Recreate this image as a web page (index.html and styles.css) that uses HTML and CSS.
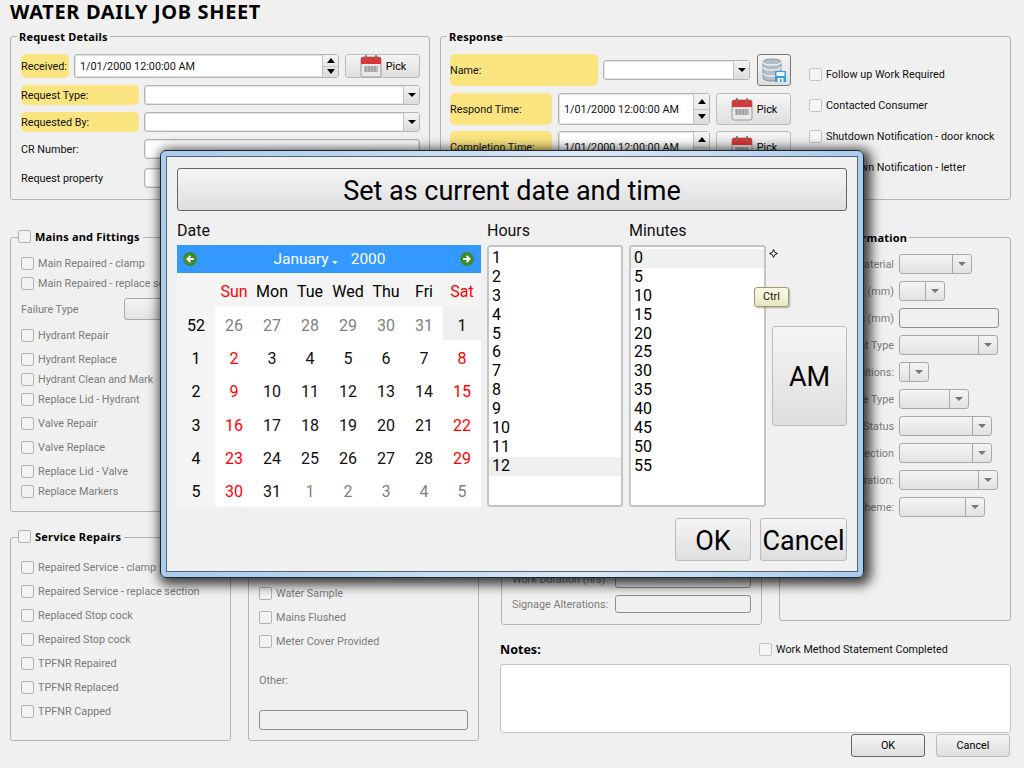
FILE: index.html
```html
<!DOCTYPE html>
<html lang="en">
<head>
    <meta charset="UTF-8">
    <title>Water Daily Job Sheet</title>
    <link rel="stylesheet" href="styles.css">
</head>
<body>
    <svg class="defs" width="0" height="0">
        <symbol id="cal" viewBox="0 0 24 24">
            <rect x="2" y="3" width="20" height="20" rx="2" fill="#e8e8e8" stroke="#9a9a9a"/>
            <path d="M2 5a2 2 0 0 1 2-2h16a2 2 0 0 1 2 2v5H2z" fill="#d9363a"/>
            <rect x="6" y="1" width="2" height="5" rx="1" fill="#8a6a60"/>
            <rect x="16" y="1" width="2" height="5" rx="1" fill="#8a6a60"/>
            <path d="M5 13h14M5 15h14M5 17h14M7 12v6M10 12v6M13 12v6M16 12v6" stroke="#8f8f8f" stroke-width="1"/>
        </symbol>
    </svg>

    <div class="page">
        <h1>WATER DAILY JOB SHEET</h1>

        <div class="top">
            <section class="group details">
                <div class="group-title">Request Details</div>
                <div class="row row-received">
                    <span class="req req-short">Received:</span>
                    <div class="spin spin-wide"><span>1/01/2000 12:00:00 AM</span><b class="spin-btns"><i class="up"></i><i class="down"></i></b></div>
                    <button class="btn pick"><svg width="24" height="24"><use href="#cal"/></svg>Pick</button>
                </div>
                <div class="row row-20 mt-7">
                    <span class="req req-wide">Request Type:</span>
                    <div class="combo grow"><b class="arrow"></b></div>
                </div>
                <div class="row row-20 mt-7">
                    <span class="req req-wide">Requested By:</span>
                    <div class="combo grow"><b class="arrow"></b></div>
                </div>
                <div class="row row-20 mt-7">
                    <span class="plain-label">CR Number:</span>
                    <div class="field grow"></div>
                </div>
                <div class="row row-20 mt-9">
                    <span class="plain-label">Request property</span>
                    <div class="field grow"></div>
                </div>
            </section>

            <section class="group response">
                <div class="group-title">Response</div>
                <div class="response-body">
                    <div class="response-left">
                        <div class="row row-32">
                            <span class="req req-name">Name:</span>
                            <div class="combo combo-name"><b class="arrow"></b></div>
                            <button class="btn db-btn">
                                <svg width="26" height="26" viewBox="0 0 26 26">
                                    <path d="M2 5c0-4 18-4 18 0v16c0 4-18 4-18 0z" fill="#b4bcc4" stroke="#8a949c"/>
                                    <path d="M2 10c0 4 18 4 18 0M2 16c0 4 18 4 18 0M2 5c0 4 18 4 18 0" fill="none" stroke="#eef1f3" stroke-width="1.3"/>
                                    <rect x="14" y="14" width="11" height="11" fill="#3f9ad6"/>
                                    <rect x="15.500" y="15" width="8" height="4" fill="#eaf4fb"/>
                                    <path d="M16.500 25v-4h6v4h-2v-3h-1.500v3z" fill="#eaf4fb"/>
                                </svg>
                            </button>
                        </div>
                        <div class="row row-32 mt-7">
                            <span class="req req-time">Respond Time:</span>
                            <div class="spin spin-time"><span>1/01/2000 12:00:00 AM</span><b class="spin-btns"><i class="up"></i><i class="down"></i></b></div>
                            <button class="btn pick"><svg width="24" height="24"><use href="#cal"/></svg>Pick</button>
                        </div>
                        <div class="row row-32 mt-6">
                            <span class="req req-time">Completion Time:</span>
                            <div class="spin spin-time"><span>1/01/2000 12:00:00 AM</span><b class="spin-btns"><i class="up"></i><i class="down"></i></b></div>
                            <button class="btn pick"><svg width="24" height="24"><use href="#cal"/></svg>Pick</button>
                        </div>
                    </div>
                    <div class="response-checks">
                        <label class="check enabled"><i></i>Follow up Work Required</label>
                        <label class="check enabled"><i></i>Contacted Consumer</label>
                        <label class="check enabled"><i></i>Shutdown Notification - door knock</label>
                        <label class="check enabled"><i></i>Shutdown Notification - letter</label>
                    </div>
                </div>
            </section>
        </div>

        <div class="lower">
            <div class="col-a">
                <section class="group mains">
                    <div class="group-title has-check"><i class="box"></i>Mains and Fittings</div>
                    <label class="check"><i></i>Main Repaired - clamp</label>
                    <label class="check"><i></i>Main Repaired - replace section</label>
                    <div class="row failure mt-6"><span class="muted">Failure Type</span><div class="combo disabled failure-combo"></div></div>
                    <label class="check mt-6"><i></i>Hydrant Repair</label>
                    <label class="check mt-4"><i></i>Hydrant Replace</label>
                    <label class="check"><i></i>Hydrant Clean and Mark</label>
                    <label class="check"><i></i>Replace Lid - Hydrant</label>
                    <label class="check mt-4"><i></i>Valve Repair</label>
                    <label class="check mt-4"><i></i>Valve Replace</label>
                    <label class="check mt-4"><i></i>Replace Lid - Valve</label>
                    <label class="check"><i></i>Replace Markers</label>
                </section>
                <section class="group service">
                    <div class="group-title has-check"><i class="box"></i>Service Repairs</div>
                    <label class="check spaced"><i></i>Repaired Service - clamp</label>
                    <label class="check spaced"><i></i>Repaired Service - replace section</label>
                    <label class="check spaced"><i></i>Replaced Stop cock</label>
                    <label class="check spaced"><i></i>Repaired Stop cock</label>
                    <label class="check spaced"><i></i>TPFNR Repaired</label>
                    <label class="check spaced"><i></i>TPFNR Replaced</label>
                    <label class="check spaced"><i></i>TPFNR Capped</label>
                </section>
            </div>

            <section class="group col-b">
                <label class="check spaced"><i></i>Water Sample</label>
                <label class="check spaced"><i></i>Mains Flushed</label>
                <label class="check spaced"><i></i>Meter Cover Provided</label>
                <span class="muted other-label">Other:</span>
                <div class="field disabled other-field"></div>
            </section>

            <div class="col-c">
                <div class="col-c-groups">
                    <section class="group work">
                        <div class="row work-row"><span class="muted">Work Duration (hrs)</span><div class="field disabled work-field"></div></div>
                        <div class="row work-row mt-7"><span class="muted">Signage Alterations:</span><div class="field disabled work-field"></div></div>
                    </section>
                    <section class="group info">
                        <div class="group-title info-title">Information</div>
                        <div class="info-row"><span class="muted">Material</span><div class="combo disabled w-73"><b class="arrow"></b></div></div>
                        <div class="info-row"><span class="muted">Diameter (mm)</span><div class="combo disabled w-46"><b class="arrow"></b></div></div>
                        <div class="info-row"><span class="muted">Length (mm)</span><div class="field disabled w-100"></div></div>
                        <div class="info-row"><span class="muted">Joint Type</span><div class="combo disabled w-99"><b class="arrow"></b></div></div>
                        <div class="info-row"><span class="muted">Conditions:</span><div class="combo disabled w-30"><b class="arrow"></b></div></div>
                        <div class="info-row"><span class="muted">Pipe Type</span><div class="combo disabled w-70"><b class="arrow"></b></div></div>
                        <div class="info-row"><span class="muted">Status</span><div class="combo disabled w-93"><b class="arrow"></b></div></div>
                        <div class="info-row"><span class="muted">Direction</span><div class="combo disabled w-93"><b class="arrow"></b></div></div>
                        <div class="info-row"><span class="muted">Duration:</span><div class="combo disabled w-99"><b class="arrow"></b></div></div>
                        <div class="info-row"><span class="muted">Scheme:</span><div class="combo disabled w-86"><b class="arrow"></b></div></div>
                    </section>
                </div>
                <div class="notes-head">
                    <span class="notes-label">Notes:</span>
                    <label class="check enabled"><i></i>Work Method Statement Completed</label>
                </div>
                <div class="notes"></div>
                <div class="form-buttons">
                    <button class="btn form-btn default">OK</button>
                    <button class="btn form-btn">Cancel</button>
                </div>
            </div>
        </div>
    </div>

    <!-- date picker dialog -->
    <div class="dialog">
        <div class="dialog-inner">
            <button class="btn now-btn">Set as current date and time</button>
            <div class="pickers">
                <div class="date-col">
                    <div class="pick-label">Date</div>
                    <div class="calendar">
                        <div class="cal-head">
                            <svg width="14" height="14" viewBox="0 0 16 16"><circle cx="8" cy="8" r="8" fill="#3d8b2c"/><path d="M12.500 8H6M8.500 4.500 5 8l3.500 3.500" fill="none" stroke="#fff" stroke-width="2.200"/></svg>
                            <span class="cal-title">January<i class="cal-drop"></i><em>2000</em></span>
                            <svg width="14" height="14" viewBox="0 0 16 16"><circle cx="8" cy="8" r="8" fill="#3d8b2c"/><path d="M3.500 8H10M7.500 4.500 11 8l-3.500 3.500" fill="none" stroke="#fff" stroke-width="2.200"/></svg>
                        </div>
                        <div class="cal-grid">
                            <span class="hd"></span><span class="hd red">Sun</span><span class="hd">Mon</span><span class="hd">Tue</span><span class="hd">Wed</span><span class="hd">Thu</span><span class="hd">Fri</span><span class="hd red">Sat</span>
                            <span class="wk">52</span><span class="gr">26</span><span class="gr">27</span><span class="gr">28</span><span class="gr">29</span><span class="gr">30</span><span class="gr">31</span><span class="sel">1</span>
                            <span class="wk">1</span><span class="red">2</span><span>3</span><span>4</span><span>5</span><span>6</span><span>7</span><span class="red">8</span>
                            <span class="wk">2</span><span class="red">9</span><span>10</span><span>11</span><span>12</span><span>13</span><span>14</span><span class="red">15</span>
                            <span class="wk">3</span><span class="red">16</span><span>17</span><span>18</span><span>19</span><span>20</span><span>21</span><span class="red">22</span>
                            <span class="wk">4</span><span class="red">23</span><span>24</span><span>25</span><span>26</span><span>27</span><span>28</span><span class="red">29</span>
                            <span class="wk">5</span><span class="red">30</span><span>31</span><span class="gr">1</span><span class="gr">2</span><span class="gr">3</span><span class="gr">4</span><span class="gr">5</span>
                        </div>
                    </div>
                </div>
                <div class="list-col">
                    <div class="pick-label">Hours</div>
                    <ul class="list">
                        <li>1</li><li>2</li><li>3</li><li>4</li><li>5</li><li>6</li><li>7</li><li>8</li><li>9</li><li>10</li><li>11</li><li class="on">12</li>
                    </ul>
                </div>
                <div class="list-col minutes">
                    <div class="pick-label">Minutes</div>
                    <ul class="list">
                        <li class="on">0</li><li>5</li><li>10</li><li>15</li><li>20</li><li>25</li><li>30</li><li>35</li><li>40</li><li>45</li><li>50</li><li>55</li>
                    </ul>
                </div>
                <button class="btn am-btn">AM</button>
            </div>
            <div class="dialog-buttons">
                <button class="btn big-btn ok">OK</button>
                <button class="btn big-btn cancel">Cancel</button>
            </div>
        </div>
    </div>

    <svg class="cursor" width="9" height="9" viewBox="0 0 9 9"><path d="M4.500 .5 5.700 3.300 8.500 4.500 5.700 5.700 4.500 8.500 3.300 5.700 .5 4.500 3.300 3.300z" fill="#fff" stroke="#000" stroke-width=".9"/></svg>
    <div class="tooltip">Ctrl</div>
</body>
</html>
```

FILE: styles.css
```css
* {
    box-sizing: border-box;
    margin: 0;
    padding: 0;
}

body {
    width: 1024px;
    height: 768px;
    overflow: hidden;
    position: relative;
    background-color: #f0f0f0;
    color: #111;
    font-family: Roboto, sans-serif;
    font-size: 10.8px;
}

.defs {
    position: absolute;
}

.page {
    padding: 0 13px 0 10px;
}

h1 {
    height: 36px;
    font-family: "Noto Sans", sans-serif;
    font-size: 20px;
    line-height: 24px;
    font-weight: 700;
    letter-spacing: 0.65px;
    color: #000;
}

.top {
    display: flex;
    gap: 10px;
    height: 164px;
}

.group {
    border: 1px solid #b4b4b4;
    border-radius: 3px;
}

.group-title {
    width: fit-content;
    margin: -8px 0 0 -4px;
    padding: 0 2px;
    height: 15px;
    line-height: 15px;
    background-color: #f0f0f0;
    font-family: "Noto Sans", sans-serif;
    font-size: 11px;
    font-weight: 700;
    letter-spacing: 0.2px;
    color: #000;
}

.has-check {
    display: flex;
    align-items: center;
    margin-left: -3px;
    padding: 0 3px 2px 0;
}

.box,
.check i {
    display: block;
    flex: none;
    width: 13px;
    height: 13px;
    border: 1px solid #b2b2b2;
    border-radius: 2px;
    background-color: #f2f2f2;
}

.box {
    margin-right: 4px;
}

.row {
    display: flex;
    align-items: center;
}

.row-20 { height: 20px; }
.row-32 { height: 32px; }
.mt-4 { margin-top: 4px; }
.mt-6 { margin-top: 6px; }
.mt-7 { margin-top: 7px; }
.mt-9 { margin-top: 9px; }

/* request details */
.details {
    width: 420px;
    padding: 0 9px 0 10px;
}

.row-received {
    height: 24px;
    margin-top: 10px;
    gap: 5px;
}

.row-received .pick {
    margin-left: 1px;
}

.req {
    display: flex;
    align-items: center;
    align-self: stretch;
    flex: none;
    background-color: #f9e480;
    border-radius: 5px;
}

.req-short { width: 48px; }
.req-wide { width: 118px; margin-right: 5px; }
.req-name { width: 148px; margin-right: 5px; }
.req-time { width: 102px; margin-right: 6px; }

.plain-label {
    width: 123px;
    flex: none;
}

.grow {
    flex: 1;
}

.field,
.combo,
.spin {
    position: relative;
    height: 20px;
    background-color: #fff;
    border: 1px solid #b4b4b4;
    border-radius: 3px;
    box-shadow: inset 0 0 0 1px #e2e2e2;
}

.spin {
    display: flex;
    align-items: center;
    align-self: stretch;
    height: auto;
    padding-left: 5px;
}

.spin-wide { width: 265px; }
.spin-time { width: 152px; margin-right: 6px; }

.spin-btns {
    position: absolute;
    top: 0;
    right: 0;
    bottom: 0;
    width: 16px;
    display: flex;
    flex-direction: column;
    border-left: 1px solid #c4c4c4;
    background: linear-gradient(#f4f4f4, #dcdcdc);
}

.spin-btns i {
    flex: 1;
    display: flex;
    align-items: center;
    justify-content: center;
}

.spin-btns .up::before {
    content: "";
    border: 4px solid transparent;
    border-top: 0;
    border-bottom: 5px solid #000;
}

.spin-btns .down {
    border-top: 1px solid #c4c4c4;
}

.spin-btns .down::before {
    content: "";
    border: 4px solid transparent;
    border-bottom: 0;
    border-top: 5px solid #000;
}

.arrow {
    position: absolute;
    top: 0;
    right: 0;
    bottom: 0;
    width: 16px;
    display: flex;
    align-items: center;
    justify-content: center;
    border-left: 1px solid #c4c4c4;
    background: linear-gradient(#f4f4f4, #dcdcdc);
}

.arrow::before {
    content: "";
    border: 4px solid transparent;
    border-bottom: 0;
    border-top: 4px solid #000;
}

.disabled {
    background: linear-gradient(#f4f4f4, #e2e2e2);
    border-color: #a8a8a8;
    box-shadow: none;
}

.field.disabled {
    background: #f0f0f0;
    border-color: #8e8e8e;
}

.disabled .arrow {
    width: 19px;
    border-left-color: #a8a8a8;
    background: none;
}

.disabled .arrow::before {
    border-top-color: #777;
}

.btn {
    display: flex;
    align-items: center;
    justify-content: center;
    background: linear-gradient(#f5f5f5, #dedede);
    border: 1px solid #bbb;
    border-radius: 3px;
    color: #000;
    font-family: inherit;
}

.pick {
    width: 75px;
    flex: none;
    align-self: stretch;
    gap: 3px;
    font-size: 10.8px;
}

/* response */
.response {
    flex: 1;
    padding: 0 10px 0 9px;
}

.response .group-title {
    margin-left: -3px;
}

.response-body {
    display: flex;
    margin-top: 10px;
}

.response-left {
    width: 341px;
    flex: none;
}

.combo-name {
    width: 147px;
    margin-right: 7px;
}

.db-btn {
    width: 34px;
    align-self: stretch;
    border-color: #777;
}

.response-checks {
    margin: 10px 0 0 18px;
    display: flex;
    flex-direction: column;
    gap: 11px;
}

.check {
    display: flex;
    align-items: center;
    gap: 4px;
    height: 20px;
    color: #7b7b7b;
    white-space: nowrap;
}

.enabled {
    color: #111;
}

.enabled i {
    background-color: #f5f5f5;
    border-color: #c4c4c4;
}

.spaced {
    margin-bottom: 4px;
}

.muted {
    color: #7b7b7b;
    white-space: nowrap;
}

/* lower area */
.lower {
    display: flex;
    margin-top: 37px;
}

.col-a {
    width: 221px;
    flex: none;
    margin-right: 17px;
}

.mains {
    height: 275px;
    padding: 0 10px;
}

.mains .group-title {
    margin-bottom: 8px;
}

.service {
    height: 204px;
    margin-top: 25px;
    padding: 0 10px;
}

.service .group-title {
    margin-bottom: 12px;
}

.failure {
    height: 20px;
}

.failure .muted {
    width: 103px;
    flex: none;
}

.failure-combo {
    width: 90px;
    flex: none;
    height: 22px;
}

.col-b {
    width: 231px;
    height: 504px;
    flex: none;
    margin-right: 21px;
    padding: 0 10px 10px;
    display: flex;
    flex-direction: column;
    justify-content: flex-end;
}

.other-label {
    margin: 19px 0 23px;
}

.other-field {
    height: 20px;
}

.col-c {
    width: 511px;
    flex: none;
}

.col-c-groups {
    display: flex;
    height: 388px;
}

.work {
    width: 261px;
    height: 388px;
    margin-left: 1px;
    margin-right: 17px;
    padding: 0 10px 11px;
    display: flex;
    flex-direction: column;
    justify-content: flex-end;
}

.work-row {
    height: 18px;
    justify-content: space-between;
}

.work-field {
    width: 136px;
    height: 18px;
}

.info {
    width: 232px;
    height: 384px;
    padding: 0 0 0 10px;
}

.info-title {
    margin-left: 46px;
}

.info-row {
    display: flex;
    align-items: center;
    height: 20px;
    margin-top: 7px;
}

.info-row:nth-child(2) {
    margin-top: 9px;
}

.info-row .muted {
    width: 109px;
    flex: none;
    text-align: right;
    padding-right: 5px;
}

.w-30 { width: 30px; }
.w-46 { width: 46px; }
.w-70 { width: 70px; }
.w-73 { width: 73px; }
.w-86 { width: 86px; }
.w-93 { width: 93px; }
.w-99 { width: 99px; }
.w-100 { width: 100px; }

.notes-head {
    display: flex;
    align-items: center;
    height: 20px;
    margin-top: 14px;
}

.notes-label {
    width: 259px;
    font-family: "Noto Sans", sans-serif;
    font-size: 12.5px;
    font-weight: 700;
    color: #000;
}

.notes {
    height: 69px;
    margin-top: 5px;
    background-color: #fff;
    border: 1px solid #c4c4c4;
    border-radius: 3px;
}

.form-buttons {
    display: flex;
    justify-content: flex-end;
    gap: 11px;
    margin-top: 1px;
    padding-right: 1px;
}

.form-btn {
    width: 74px;
    height: 23px;
    font-size: 10.8px;
}

.default {
    border-color: #666;
}

/* dialog */
.dialog {
    position: absolute;
    left: 160px;
    top: 150px;
    width: 704px;
    height: 428px;
    padding: 5px;
    border: 1px solid #1c2730;
    border-radius: 6px;
    background: linear-gradient(90deg, #a8cbee, #c6dcf1 40%, #dbe8f5 60%, #a8cbee);
    box-shadow: 3px 3px 12px 4px rgba(0, 0, 0, 0.75);
}

.dialog-inner {
    height: 100%;
    padding: 11px 10px 0;
    background-color: #f0f0f0;
    border: 1px solid #5a6570;
    font-size: 16px;
}

.now-btn {
    width: 670px;
    height: 43px;
    padding-top: 2px;
    border-color: #666;
    font-size: 27px;
}

.pickers {
    display: flex;
    margin-top: 9px;
}

.pick-label {
    height: 25px;
    line-height: 22px;
}

.date-col {
    width: 304px;
    margin-right: 6px;
}

.calendar {
    height: 262px;
}

.cal-head {
    display: flex;
    align-items: center;
    justify-content: space-between;
    height: 28px;
    padding: 0 7px 0 6px;
    background-color: #3399ff;
    color: #fff;
}

.cal-title {
    font-size: 15.5px;
    padding-left: 2px;
}

.cal-drop {
    display: inline-block;
    margin: 0 13px 0 3px;
    border: 3px solid transparent;
    border-bottom: 0;
    border-top: 3px solid #fff;
}

.cal-title em {
    font-style: normal;
}

.cal-grid {
    display: grid;
    grid-template-columns: 38px repeat(7, 38px);
    grid-template-rows: 34px repeat(6, 33.33px);
    background-color: #fff;
    text-align: center;
}

.cal-grid span {
    display: flex;
    align-items: center;
    justify-content: center;
    padding-top: 3px;
}

.cal-grid .hd,
.cal-grid .wk {
    background-color: #f4f4f4;
    color: #000;
}

.cal-grid .red {
    color: #f00;
}

.cal-grid .gr {
    color: #808080;
}

.cal-grid .sel {
    background-color: #efefef;
}

.list-col {
    width: 136px;
    margin-right: 6px;
}

.minutes {
    width: 137px;
}

.list {
    height: 262px;
    padding: 2px 0 0 4px;
    list-style: none;
    background-color: #fff;
    border: 2px solid #c4c4c4;
    border-radius: 3px;
    color: #000;
}

.list li {
    height: 18.9px;
    line-height: 18.9px;
    margin-left: -4px;
    padding-left: 3px;
}

.list .on {
    background-color: #efefef;
}

.am-btn {
    width: 75px;
    height: 100px;
    margin-top: 106px;
    padding-top: 2px;
    font-size: 27px;
}

.dialog-buttons {
    display: flex;
    justify-content: flex-end;
    gap: 9px;
    margin-top: 11px;
}

.big-btn {
    height: 43px;
    padding-top: 2px;
    font-size: 27px;
}

.ok { width: 76px; }
.cancel { width: 87px; }

.cursor {
    position: absolute;
    left: 769px;
    top: 249px;
}

.tooltip {
    position: absolute;
    left: 754px;
    top: 287px;
    width: 35px;
    height: 20px;
    line-height: 18px;
    text-align: center;
    background: linear-gradient(#fdfde8, #e6e6c4);
    border: 1px solid #a09a6a;
    border-radius: 3px;
    box-shadow: 1px 1px 2px rgba(0, 0, 0, 0.3);
}
```
